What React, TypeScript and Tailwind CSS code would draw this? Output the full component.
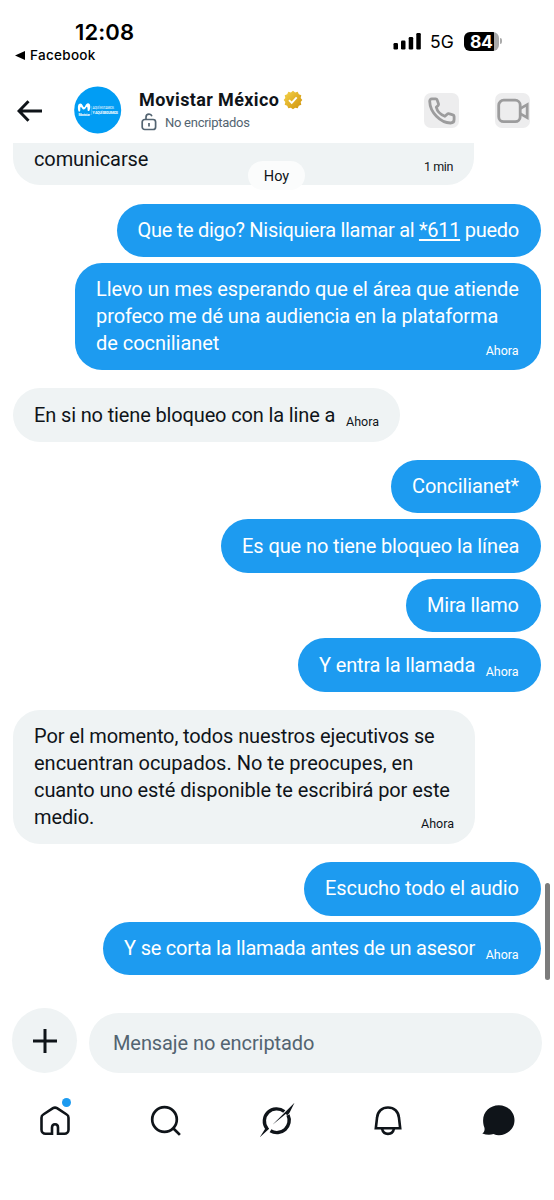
import type { ReactNode } from 'react'

type Line = { content: ReactNode; tracking?: string }
type Message = { lines: Line[]; mine?: boolean; time?: string; box: string }

const messages: Message[] = [
  {
    mine: true,
    box: 'w-[424px]',
    lines: [{ content: <>Que te digo? Nisiquiera llamar al <u className="underline-offset-2">*611</u> puedo</>, tracking: 'tracking-[-0.3px]' }],
  },
  {
    mine: true,
    time: 'Ahora',
    box: 'w-[465.5px] mt-[6px]',
    lines: [
      { content: 'Llevo un mes esperando que el área que atiende', tracking: 'tracking-[-0.1px]' },
      { content: 'profeco me dé una audiencia en la plataforma', tracking: 'tracking-[-0.12px]' },
      { content: 'de cocnilianet', tracking: 'tracking-[-0.05px]' },
    ],
  },
  {
    time: 'Ahora',
    box: 'w-[387px] mt-[18px]',
    lines: [{ content: 'En si no tiene bloqueo con la line a', tracking: 'tracking-[-0.14px]' }],
  },
  { mine: true, box: 'w-[149.5px] mt-[18px]', lines: [{ content: 'Concilianet*', tracking: 'tracking-[-0.1px]' }] },
  { mine: true, box: 'w-[319.5px] mt-[6px]', lines: [{ content: 'Es que no tiene bloqueo la línea', tracking: 'tracking-[-0.11px]' }] },
  { mine: true, box: 'w-[134.5px] mt-[6px]', lines: [{ content: 'Mira llamo', tracking: 'tracking-[-0.25px]' }] },
  { mine: true, time: 'Ahora', box: 'w-[242.5px] mt-[6px]', lines: [{ content: 'Y entra la llamada', tracking: 'tracking-[-0.18px]' }] },
  {
    time: 'Ahora',
    box: 'w-[462px] mt-[18px]',
    lines: [
      { content: 'Por el momento, todos nuestros ejecutivos se', tracking: 'tracking-[-0.11px]' },
      { content: 'encuentran ocupados. No te preocupes, en', tracking: 'tracking-[-0.01px]' },
      { content: 'cuanto uno esté disponible te escribirá por este', tracking: 'tracking-[-0.09px]' },
      { content: 'medio.', tracking: 'tracking-[-0.13px]' },
    ],
  },
  { mine: true, box: 'w-[236.5px] mt-[18px]', lines: [{ content: 'Escucho todo el audio', tracking: 'tracking-[-0.13px]' }] },
  { mine: true, time: 'Ahora', box: 'w-[437.5px] mt-[6px]', lines: [{ content: 'Y se corta la llamada antes de un asesor', tracking: 'tracking-[-0.22px]' }] },
]

function Bubble({ lines, mine, time, box }: Message) {
  return (
    <div
      className={`${box} ${mine ? 'self-end bg-[#1d9bf0] pr-[22px] text-white' : 'self-start bg-[#eff3f4] pr-[21px] text-[#0f1419]'} flex items-end justify-between whitespace-nowrap rounded-[27px] py-[13.3px] pl-[21px] text-[20px] leading-[26.9px]`}
    >
      <div>
        {lines.map((line, i) => (
          <div key={i} className={line.tracking}>{line.content}</div>
        ))}
      </div>
      {time && <span className="-mb-[3.5px] -ml-20 text-[12.5px] leading-5">{time}</span>}
    </div>
  )
}

function StatusBar() {
  return (
    <div className="flex h-[76px] shrink-0 justify-between font-[Inter,sans-serif] text-black">
      <div className="pl-[15px] pt-[18px]">
        <div className="pl-[60px] text-[22px] font-semibold leading-7 tracking-[0.1px]">12:08</div>
        <div className="flex items-center gap-[5px] text-[13.5px] font-medium leading-[18px] tracking-[0.3px]">
          <svg width="10" height="9" viewBox="0 0 10 9"><path d="M0 4.5 10 0v9z" /></svg>
          Facebook
        </div>
      </div>
      <div className="mt-[31px] flex h-5 items-center pr-[52px]">
        <svg width="29" height="18" viewBox="0 0 29 18">
          <rect x="0.5" y="11" width="4.5" height="6.5" rx="1.2" />
          <rect x="8" y="8.5" width="4.5" height="9" rx="1.2" />
          <rect x="15.7" y="5" width="4.5" height="12.5" rx="1.2" />
          <rect x="23.3" y="1" width="4.5" height="16.5" rx="1.2" />
        </svg>
        <span className="ml-2 mt-[2px] w-[26px] text-[17.5px]">5G</span>
        <div className="ml-2 flex h-[19px] w-[35px] overflow-hidden rounded-[6px] bg-linear-to-r from-black from-85% to-[#aaa] to-85% pl-[6px] text-[17.5px] font-bold leading-[19px] tracking-[-0.4px] text-white">
          84
        </div>
        <div className="ml-[1px] h-[6px] w-[2px] rounded-r bg-[#aaa]" />
      </div>
    </div>
  )
}

function Avatar() {
  return (
    <svg className="ml-[31px]" width="48" height="48" viewBox="0 0 48 48">
      <circle cx="23.7" cy="24" r="23.5" fill="#019df4" />
      <path d="M4.400 25c-1-4-.4-7.400 2-7.400 2.200 0 2.500 3.700 3.700 3.700s1.500-4 3.900-4c2.600 0 2.900 4.700 1.500 7.100-.6.9-1.900.8-1.900-.5 0-1.400-.2-3.100-.8-3.100-.8 0-1.300 2.800-3 2.800s-2-2.700-2.900-2.700c-.7 0-.6 1.800-.6 3.200 0 1.700-1.400 2.200-1.900.9z" fill="#fff" />
      <text x="4.400" y="30" fontSize="3.300" fontWeight="700" fill="#fff" textLength="11.500">Movistar</text>
      <path d="M17.700 20v9" stroke="#fff" strokeOpacity=".5" strokeWidth=".5" />
      <text x="18.500" y="23.200" fontSize="3.300" fill="#fff" textLength="21.500">AQUÍ ESTAMOS</text>
      <text x="18.500" y="28" fontSize="3.500" fontWeight="700" fill="#fff" textLength="25.500">Y AQUÍ SEGUIMOS</text>
    </svg>
  )
}

function VerifiedBadge() {
  return (
    <svg width="20" height="20" viewBox="0 0 20 20">
      <defs>
        <linearGradient id="gold" x1="0" y1="0" x2="1" y2="1">
          <stop stopColor="#f5d64d" />
          <stop offset=".55" stopColor="#e0ae26" />
          <stop offset="1" stopColor="#cf9310" />
        </linearGradient>
      </defs>
      <path d="m10 .7 2.1 1.7 2.6-.6 1.1 2.4 2.5 1.1-.6 2.6L19.3 10l-1.6 2.1.6 2.6-2.5 1.1-1.1 2.5-2.6-.6-2.1 1.6-2.1-1.6-2.6.6-1.1-2.5-2.5-1.1.6-2.6L.7 10l1.6-2.1-.6-2.6 2.5-1.1 1.1-2.4 2.6.6z" fill="url(#gold)" />
      <path d="m6 10.2 2.7 2.7 5-5.6" fill="none" stroke="#fff" strokeWidth="1.9" />
    </svg>
  )
}

function Header() {
  return (
    <header className="flex h-[67px] shrink-0 pl-[17px] pr-6">
      <svg className="mt-6" width="26" height="22" viewBox="0 0 26 22" fill="none" stroke="#0f1419" strokeWidth="3">
        <path d="M25 11H2.2M11.5 1.2 2 11l9.500 9.800" />
      </svg>
      <div className="mt-[10px]"><Avatar /></div>
      <div className="ml-[17px] mt-[12px]">
        <div className="flex items-center gap-[4px]">
          <span className="w-[140px] whitespace-nowrap text-[18px] font-bold leading-6 tracking-[0.37px] text-[#0f1419]">Movistar México</span>
          <VerifiedBadge />
        </div>
        <div className="mt-px flex items-center pl-[2px] text-[13px] leading-5 text-[#536471]">
          <svg className="-mt-[2px] mr-[8px]" width="16" height="18" viewBox="0 0 16 18" fill="none" stroke="currentColor" strokeWidth="1.7">
            <rect x="1.2" y="6.5" width="13.4" height="10" rx="2.5" />
            <path d="M5 6.3V4.2C5 2.200 6.200 1.200 8 1.200c1.500 0 2.500.7 2.900 2M8 10v3.400" />
          </svg>
          <span className="tracking-[-0.27px]">No encriptados</span>
        </div>
      </div>
      <div className="ml-auto mt-[17px] flex gap-9">
        <div className="flex size-[35px] items-center justify-center rounded-[7px] bg-[#ededee]">
          <svg width="28" height="28" viewBox="0 0 28 28" fill="none" stroke="#9c9c9d" strokeWidth="2.8" strokeLinejoin="round">
            <path d="M3.8 1.9h4c.7 0 1.1.4 1.3 1l1.4 4c.2.6 0 1-.4 1.5L8.300 10.200c.8 3.500 4.400 7.400 8.600 9.100l2.500-2.300c.4-.4.8-.5 1.400-.3l4 1.100c.9.3 1.300.8 1.300 1.600v3.100c0 2.400-1.300 3.500-3.600 3.500C12.500 26 2 15.500 1.700 4.300c0-1.500.7-2.400 2.100-2.400z" />
          </svg>
        </div>
        <div className="flex size-[35px] items-center justify-center rounded-[7px] bg-[#ededee]">
          <svg width="32" height="26" viewBox="0 0 32 26" fill="none" stroke="#9c9c9d" strokeWidth="2.800">
            <rect x="1.700" y="2.200" width="21.500" height="21.500" rx="5" />
            <path d="m23.200 10.600 7-4v13l-7-4" />
          </svg>
        </div>
      </div>
    </header>
  )
}

function BottomNav() {
  return (
    <nav className="flex h-[120px] shrink-0 items-start justify-around pt-[22px] text-[#0f1419]">
      <div className="relative">
        <svg width="36" height="36" viewBox="0 0 36 36" fill="none" stroke="currentColor" strokeWidth="2.600">
          <path d="M15 31.700H8.500a4 4 0 0 1-4-4v-12c0-1.600.6-2.500 1.800-3.200L16 6.200c1.400-.9 2.600-.9 4 0l9.700 6.300c1.200.7 1.800 1.600 1.800 3.200v12a4 4 0 0 1-4 4H21v-6.200c0-2-1.100-3.300-3-3.300s-3 1.300-3 3.300z" />
        </svg>
        <span className="absolute left-[25px] top-[-4px] size-[9px] rounded-full bg-[#1d9bf0]" />
      </div>
      <svg width="36" height="36" viewBox="0 0 36 36" fill="none" stroke="currentColor" strokeWidth="2.700">
        <circle cx="16.500" cy="17.500" r="12.300" />
        <path d="m25.200 26.200 6.700 6.700" />
      </svg>
      <svg width="36" height="36" viewBox="0 0 36 36" fill="currentColor">
        <path d="M7.800 26.500a12.300 12.300 0 0 1 17.500-17M29 13a12.300 12.300 0 0 1-17.500 15.800" fill="none" stroke="currentColor" strokeWidth="3.400" />
        <path d="M.8 35.300 6 27l2.500-2.500 1.700 2.200zM35.500.8l-5.200 10.500-2.300 2.200-1-1.800-13.500 11z" />
      </svg>
      <svg width="36" height="36" viewBox="0 0 36 36" fill="none" stroke="currentColor" strokeWidth="2.600">
        <path d="M5.800 26.300 7 16C7.500 9.500 12 5.500 18 5.500S28.500 9.500 29 16l1.200 10.300z" />
        <path d="M12 26.500c.7 3.500 2.900 5.400 6 5.400s5.300-1.900 6-5.400" />
      </svg>
      <svg width="36" height="36" viewBox="0 0 36 36" fill="currentColor">
        <path d="M17.800 3.200c8.700 0 15.700 6.600 15.700 15s-7 15-15.700 15c-1.800 0-3.600-.4-5.300-1.200-3.200 1.200-7 1-11.200-.4 1.900-1.500 2.800-3.700 2-6.300-.8-2-1.200-4.500-1.200-7.100 0-8.400 7-15 15.700-15z" />
      </svg>
    </nav>
  )
}

export default function App() {
  return (
    <main className="flex h-[1200px] w-[554px] flex-col overflow-hidden bg-white font-[Roboto,sans-serif]">
      <StatusBar />
      <Header />

      {/* Conversation */}
      <section className="relative flex h-[865px] shrink-0 flex-col pl-[13px] pr-[13.4px]">
        <div className="mb-[18.5px] flex h-[42px] w-[461px] justify-between rounded-b-[27px] bg-[#eff3f4] px-[21px] text-[#0f1419]">
          <span className="mt-[3px] text-[20px] leading-[27px] tracking-[-0.1px]">comunicarse</span>
          <span className="mt-[14px] text-[12.5px] leading-5 tracking-[-0.4px]">1 min</span>
        </div>
        <div className="absolute left-[248px] top-[18px] flex h-[29px] w-[57px] items-center justify-center rounded-full bg-[#fbfcfc] pt-[2px] text-[14.5px] text-[#0f1419]">
          Hoy
        </div>
        {messages.map((message, i) => (
          <Bubble key={i} {...message} />
        ))}
        <div className="absolute right-[4px] top-[740px] h-[97px] w-[5px] rounded-full bg-[#7b7b7b]" />
      </section>

      {/* Composer */}
      <div className="flex h-[72px] shrink-0 items-start pl-3">
        <button className="flex size-[65px] items-center justify-center rounded-full bg-[#eff3f4]">
          <svg width="24" height="24" viewBox="0 0 24 24" stroke="#0f1419" strokeWidth="3">
            <path d="M12 0v24M0 12h24" />
          </svg>
        </button>
        <div className="ml-3 mt-[5px] flex h-[60px] w-[453px] items-center rounded-full bg-[#eff3f4] pl-6 text-[20px] tracking-[-0.09px] text-[#536471]">
          Mensaje no encriptado
        </div>
      </div>

      <BottomNav />
    </main>
  )
}
